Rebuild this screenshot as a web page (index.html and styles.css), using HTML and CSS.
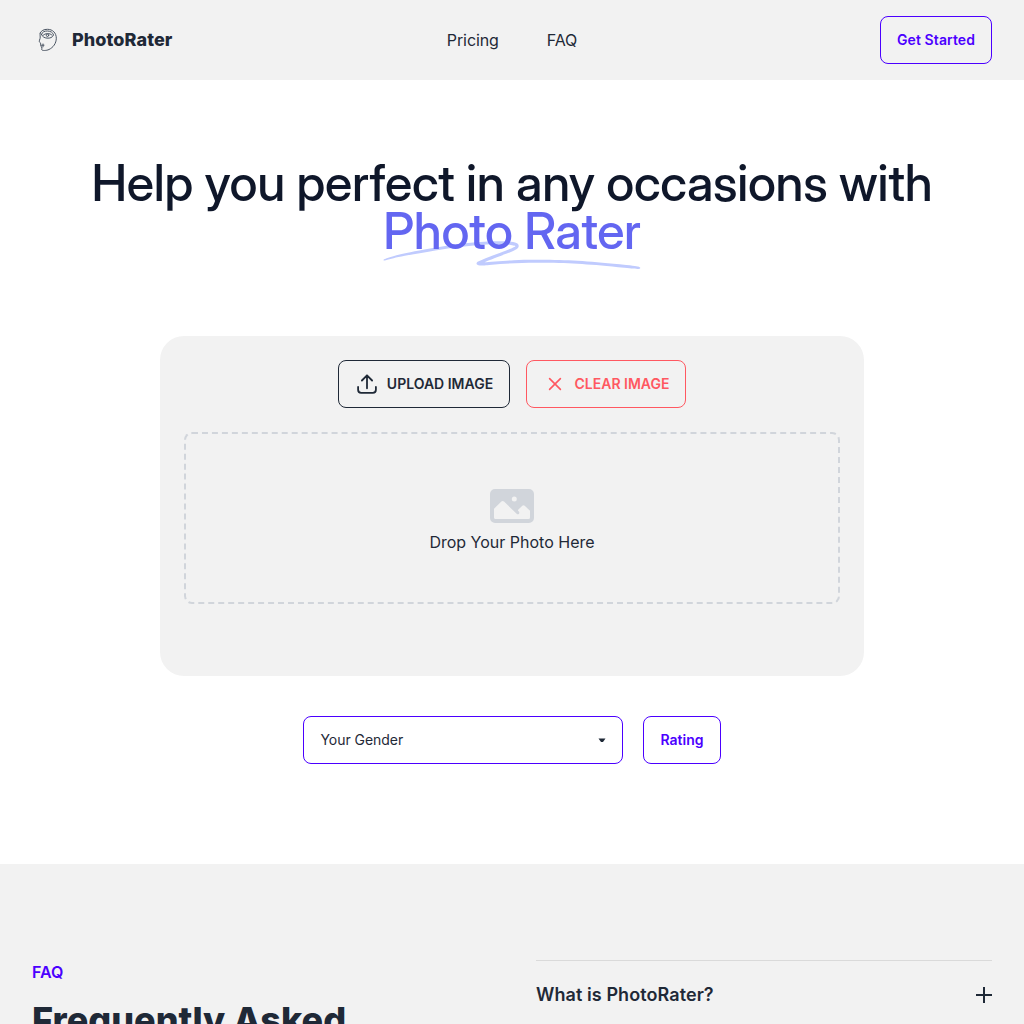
FILE: index.html
```html
<!DOCTYPE html>
<html lang="en">
<head>
<meta charset="utf-8">
<title>PhotoRater</title>
<link rel="stylesheet" href="styles.css">
</head>
<body>
<header class="nav">
  <a class="brand">
    <svg class="logo" viewBox="0 0 32 32" fill="none" stroke="#4b5563" stroke-width="1" stroke-linecap="round" stroke-linejoin="round">
      <path d="M8.2 9C9.300 6.600 11.800 5.300 15.500 5.300C20.700 5.300 24.300 9 24.300 14.200C24.300 19.500 21 23.600 17 25.500C14.500 26.700 10 26.900 9.700 25.600C9.500 24.800 10.200 24.200 9.900 23.300M8.200 9C7.700 11.500 8.500 12.500 8.100 14.300C7.800 15.700 7.100 16.800 7.200 17.700C7.300 18.500 8.600 18.300 8.700 19.100C8.700 19.700 8.300 20.200 8.600 20.700C9.100 21.400 8.400 22 9.100 22.600L9.900 23.300M9 21.200H12M11 20V22.800"/>
      <path d="M9.500 10.500C10 8 12.500 6.900 15.500 7C18.700 7.100 21 8.600 21.500 11C20.500 13.500 18 14.400 15 14.100C12.600 13.900 10.500 13 9.500 10.500ZM11 11.500C13 9 18 8.800 20 11.200"/>
      <circle cx="15.500" cy="11.300" r="1.200"/>
    </svg>
    <span>PhotoRater</span>
  </a>
  <nav class="links"><a>Pricing</a><a>FAQ</a></nav>
  <div class="nav-end"><button class="btn primary start">Get Started</button></div>
</header>
<main class="hero">
  <h1>Help you perfect in any occasions with
    <span class="mark"><svg class="swoosh" viewBox="0 0 418 42" preserveAspectRatio="none"><path d="M203.371.916c-26.013-2.078-76.686 1.963-124.73 9.946L67.3 12.749C35.421 18.062 18.2 21.766 6.004 25.934 1.244 27.561.828 27.778.874 28.61c.07 1.214.828 1.121 9.595-1.176 9.072-2.377 17.15-3.92 39.246-7.496C123.565 7.986 157.869 4.492 195.942 5.046c7.461.108 19.25 1.696 19.17 2.582-.107 1.183-7.874 4.31-25.75 10.366-21.992 7.45-35.43 12.534-36.701 13.884-2.173 2.308-.202 4.407 4.442 4.734 2.654.187 3.263.157 15.593-.78 35.401-2.686 57.944-3.488 88.365-3.143 46.327.526 75.721 2.23 130.788 7.584 19.787 1.924 20.814 1.98 24.557 1.332l.066-.011c1.201-.203 1.53-1.825.399-2.335-2.911-1.31-4.893-1.604-22.048-3.261-57.509-5.556-87.871-7.36-132.059-7.842-23.239-.254-33.617-.116-50.627.674-11.629.54-42.371 2.494-46.696 2.967-2.359.259 8.133-3.625 26.504-9.81 23.239-7.825 27.934-10.149 28.304-14.005.417-4.348-3.529-6-16.878-7.066Z"/></svg><span class="mark-text">Photo Rater</span></span>
  </h1>
  <section class="uploader">
    <div class="actions">
      <button class="btn neutral upload"><svg width="24" height="24" viewBox="0 0 24 24" fill="none" stroke="currentColor" stroke-width="1.8" stroke-linecap="round" stroke-linejoin="round"><path d="M3.100 15v2.800a3 3 0 0 0 3 3h11.800a3 3 0 0 0 3-3V15M6.900 8.500 12 3.300l5.100 5.200M12 3.300v13"/></svg>UPLOAD IMAGE</button>
      <button class="btn error clear"><svg width="24" height="24" viewBox="0 0 24 24" fill="none" stroke="currentColor" stroke-width="1.6" stroke-linecap="round"><path d="M6.600 17.400 17.400 6.600M6.600 6.600l10.800 10.800"/></svg>CLEAR IMAGE</button>
    </div>
    <div class="dropzone">
      <svg width="48" height="48" viewBox="-2 -7 48 48" fill="currentColor"><path fill-rule="evenodd" d="M5 0H39A5 5 0 0 1 44 5V29A5 5 0 0 1 39 34H5A5 5 0 0 1 0 29V5A5 5 0 0 1 5 0ZM4 19.800V28.500Q4 30.100 5.600 30.100H38.400Q40 30.100 40 28.500V21.800L34.700 16.700Q33.500 15.600 32.300 16.700L28.200 20.700Q27.600 21.400 28.300 22L29.100 22.800Q29.700 24 28.900 24.900Q27.700 25.800 26.600 24.800L14 12.500Q12.700 11.300 11.400 12.500ZM24.300 7.400A2.500 2.500 0 1 1 24.300 12.400A2.500 2.500 0 1 1 24.300 7.400Z"/></svg>
      <span>Drop Your Photo Here</span>
    </div>
  </section>
  <div class="controls">
    <div class="select"><span>Your Gender</span><svg width="8" height="4" viewBox="0 0 8 4" fill="currentColor"><path d="M.5 .6h7L5 3.900H3z"/></svg></div>
    <button class="btn primary">Rating</button>
  </div>
</main>
<section class="faq">
  <div class="faq-intro"><p>FAQ</p><h2>Frequently Asked Questions</h2></div>
  <div class="faq-list">
    <div class="question"><span>What is PhotoRater?</span><svg width="16" height="16" viewBox="0 0 16 16" fill="currentColor"><path d="M7 0h2v7h7v2H9v7H7V9H0V7h7z"/></svg></div>
  </div>
</section>
</body>
</html>
```
FILE: styles.css
```css
* { box-sizing: border-box; }
body { margin: 0; height: 1024px; overflow: hidden; background: #fff; color: #1f2937; font: 16px/24px Inter, sans-serif; }
h1, h2, p { margin: 0; }
.nav { height: 80px; padding: 0 32px; background: #f2f2f2; display: grid; grid-template-columns: 1fr auto 1fr; align-items: center; }
.brand { display: flex; align-items: center; gap: 8px; font-size: 18px; font-weight: 800; line-height: 28px; letter-spacing: 0.08px; }
.logo { width: 32px; height: 32px; }
.links { display: flex; gap: 48px; letter-spacing: -0.1px; }
.nav-end { display: flex; justify-content: flex-end; }
.btn { height: 48px; padding: 0 16px; border: 1px solid currentColor; border-radius: 8px; background: transparent; font: 600 14px/14px Inter, sans-serif; display: flex; align-items: center; justify-content: center; gap: 8px; white-space: nowrap; }
.start { width: 112px; letter-spacing: 0.1px; }
.upload { width: 172px; padding: 0; }
.clear { width: 160px; padding: 0; }
.primary { color: #4b00ff; }
.neutral { color: #1f2937; }
.error { color: #ff5861; }
.hero { height: 784px; padding-top: 79px; display: flex; flex-direction: column; align-items: center; }
h1 { width: 896px; text-align: center; font-family: "Inter Display", Inter, sans-serif; font-size: 50px; line-height: 48px; font-weight: 500; letter-spacing: -0.31px; color: #0f172a; }
.mark { position: relative; white-space: nowrap; color: #6366f1; }
.mark-text { position: relative; }
.swoosh { position: absolute; left: 0; top: 66.6667%; width: 100%; height: 28px; fill: #c0cbfe; }
.uploader { width: 704px; height: 340px; margin-top: 81px; padding: 24px; border-radius: 24px; background: #f2f2f2; }
.actions { display: flex; justify-content: center; gap: 16px; }
.dropzone { height: 172px; margin-top: 24px; border: 2px dashed #d1d5db; border-radius: 8px; display: flex; flex-direction: column; align-items: center; justify-content: center; }
.dropzone svg { color: #d1d5db; }
.controls { display: flex; gap: 20px; margin-top: 40px; }
.select { width: 320px; height: 48px; padding: 0 16px; border: 1px solid #4b00ff; border-radius: 8px; display: flex; align-items: center; justify-content: space-between; font-size: 14px; letter-spacing: -0.05px; }
.faq { height: 160px; padding: 96px 32px 0; background: #f2f2f2; display: grid; grid-template-columns: 1fr 1fr; gap: 48px; overflow: hidden; }
.faq-intro p { color: #4b00ff; font-weight: 600; }
.faq-intro h2 { margin-top: 16px; font-size: 36px; line-height: 40px; font-weight: 800; }
.question { border-top: 1px solid #dadada; padding: 20px 0; display: flex; align-items: center; justify-content: space-between; font-size: 18px; line-height: 28px; font-weight: 600; letter-spacing: 0.08px; }
```
